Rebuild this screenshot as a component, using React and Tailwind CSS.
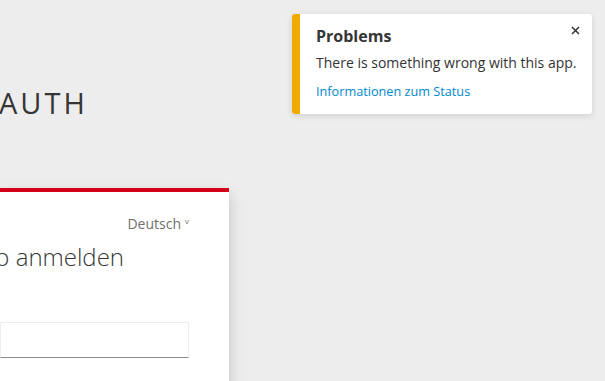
import { useState } from "react";

const font = { fontFamily: '"Open Sans", "Liberation Sans", sans-serif' };

function Toast({ onClose }) {
  return (
    <div
      className="absolute top-[14px] right-[13px] w-[300px] flex bg-white rounded-[3px] overflow-hidden shadow-[0_2px_6px_rgba(0,0,0,0.12)]"
      style={font}
    >
      <div className="w-[8px] shrink-0 bg-[#f0ab00]" />
      <div className="flex-1 pl-[16px] pr-[12px] pt-[10px] pb-[14px]">
        <div className="flex justify-between items-start">
          <h4 className="text-[16px] leading-[24px] font-bold text-[#363636]">Problems</h4>
          <button onClick={onClose} className="mt-[2px] text-[#333]" aria-label="Schließen">
            <svg width="9" height="9" viewBox="0 0 9 9">
              <path d="M1 1L8 8M8 1L1 8" stroke="#333" strokeWidth="1.5" />
            </svg>
          </button>
        </div>
        <p className="mt-[4px] text-[14px] leading-[21px] text-[#333]">
          There is something wrong with this app.
        </p>
        <a href="#" className="block mt-[9px] text-[12.7px] leading-[18px] text-[#0088ce]">
          Informationen zum Status
        </a>
      </div>
    </div>
  );
}

export default function App() {
  const [showToast, setShowToast] = useState(true);

  return (
    <div className="relative min-h-screen h-[381px] overflow-hidden bg-[#ededed]" style={font}>
      {/* Header, links abgeschnitten */}
      <div className="pt-[86px] flex justify-start">
        <h1 className="ml-[-1px] text-[29px] leading-[1.2] tracking-[3px] font-normal text-[#363636] whitespace-nowrap">
          AUTH
        </h1>
      </div>

      {/* Login-Karte */}
      <div className="mt-[67px] w-[229px] h-[300px] bg-white border-t-4 border-[#d4001a] shadow-[0_6px_14px_rgba(0,0,0,0.18)] pr-[40px] pt-[22px]">
        <div className="flex justify-end items-start text-[14px] leading-[20px] text-[#6f6f6f]">
          <span>Deutsch</span>
          <span className="ml-[4px] text-[8px] leading-[10px] mt-[2px]">v</span>
        </div>
        <div className="mt-[9px] flex justify-end w-[124px]">
          <h2 className="text-[24px] leading-[1.2] font-light text-[#363636] whitespace-nowrap">
            Bei Ihrem Konto anmelden
          </h2>
        </div>
        <div className="mt-[50px]">
          <input
            type="text"
            className="block w-full h-[36px] bg-white border border-[#ededed] border-b-[#8a8d90] outline-none px-2"
          />
        </div>
      </div>

      {showToast && <Toast onClose={() => setShowToast(false)} />}
    </div>
  );
}
